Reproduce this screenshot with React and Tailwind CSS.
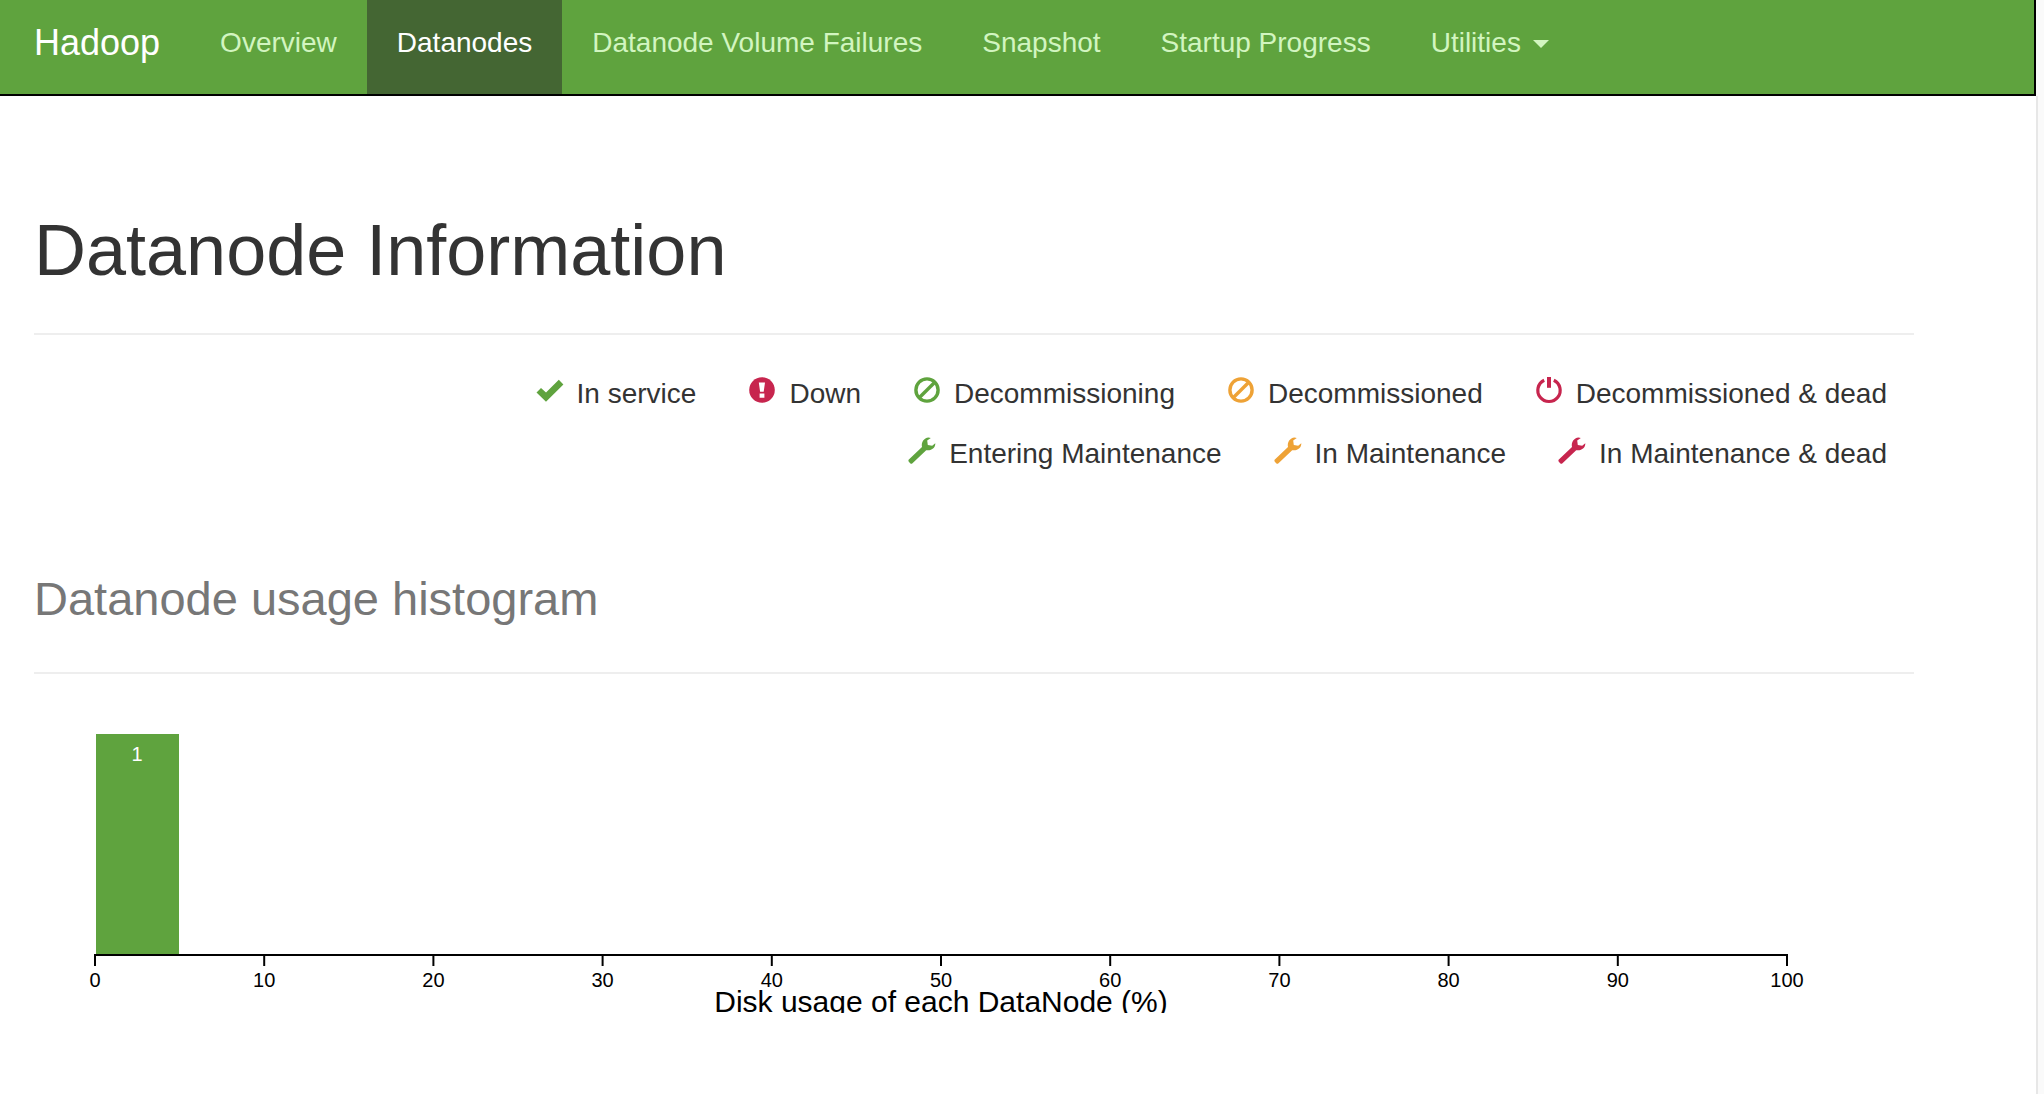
import React from "react";

const navLinks = [
  { label: "Overview" },
  { label: "Datanodes", active: true },
  { label: "Datanode Volume Failures" },
  { label: "Snapshot" },
  { label: "Startup Progress" },
];

const legendRows = [
  [
    { label: "In service", icon: "ok", color: "text-[#5fa33e]" },
    { label: "Down", icon: "alert", color: "text-[#c7254e]" },
    { label: "Decommissioning", icon: "ban", color: "text-[#5fa33e]" },
    { label: "Decommissioned", icon: "ban", color: "text-[#eea236]" },
    { label: "Decommissioned & dead", icon: "off", color: "text-[#c7254e]" },
  ],
  [
    { label: "Entering Maintenance", icon: "wrench", color: "text-[#5fa33e]" },
    { label: "In Maintenance", icon: "wrench", color: "text-[#eea236]" },
    { label: "In Maintenance & dead", icon: "wrench", color: "text-[#c7254e]" },
  ],
];

// all icons share a 28x28 grid
const icons = {
  ok: <path fill="currentColor" d="M0.5 15.5L5 11L10 15.6L22.8 2.8L27.4 7.4L10 24.8z" />,
  alert: (
    <>
      <circle cx="14" cy="13" r="12.8" fill="currentColor" />
      <path fill="#fff" d="M10.8 5.6h6.2l-1.3 9.2h-3.6zM11.6 16.5h4.8v4.2h-4.8z" />
    </>
  ),
  ban: (
    <g fill="none" stroke="currentColor" strokeWidth="3.4">
      <circle cx="14" cy="13" r="11.1" />
      <path d="M6.2 20.8L21.8 5.2" />
    </g>
  ),
  off: (
    <g fill="none" stroke="currentColor">
      <path strokeWidth="3.2" d="M9.2 3.2A11.2 11.2 0 1 0 18.8 3.2" />
      <path strokeWidth="4" d="M14 0V10.8" />
    </g>
  ),
  wrench: (
    <path
      fill="currentColor"
      d="M0.6 22.8L14 10C13 5 16 0.8 20.5 0.4L22.8 0.9L19.2 3.4L19.8 8L24.2 8.8L27.3 6.3C27.6 10.5 23.5 14.2 18.2 13.2L4.2 26.6Q3.2 27.2 2.2 26.3L0.8 24.8Q0 23.8 0.6 22.8z"
    />
  ),
};

function LegendItem({ label, icon, color }) {
  return (
    <li className="flex items-center gap-[13px]">
      <svg viewBox="0 0 28 28" aria-hidden="true" className={`mb-1.5 size-7 ${color}`}>
        {icons[icon]}
      </svg>
      {label}
    </li>
  );
}

function Navbar() {
  return (
    <header className="mr-0.5 flex border-r-2 border-b-2 border-black bg-[#5fa33e] pl-1 text-[28px] leading-10">
      <a href="#brand" className="px-[30px] pt-[23px] pb-[31px] text-4xl leading-10 text-white">
        Hadoop
      </a>
      <nav className="flex">
        {navLinks.map((link) => (
          <a
            key={link.label}
            href="#tab"
            className={
              link.active
                ? "bg-[#446633] px-[30px] pt-[23px] pb-[31px] text-white"
                : "px-[30px] pt-[23px] pb-[31px] text-[#d2f5c0]"
            }
          >
            {link.label}
          </a>
        ))}
        <button
          type="button"
          aria-haspopup="menu"
          className="flex items-center gap-3 px-[30px] pt-[23px] pb-[31px] text-[#d2f5c0]"
        >
          Utilities
          <svg viewBox="0 0 16 8" aria-hidden="true" className="mt-0.5 h-2 w-4">
            <path fill="currentColor" d="M0 0h16l-8 8z" />
          </svg>
        </button>
      </nav>
    </header>
  );
}

function Histogram() {
  const ticks = [0, 10, 20, 30, 40, 50, 60, 70, 80, 90, 100];
  const x = (value) => 61 + value * 16.92;

  return (
    <svg
      viewBox="0 0 1880 319"
      className="block w-full overflow-hidden"
      role="img"
      aria-label="Datanode usage histogram"
    >
      <rect x="62" y="40" width="83" height="220" fill="#5fa33e" />
      <text x="103" y="67" textAnchor="middle" fill="#fff" className="text-[20px]">
        1
      </text>
      <path d={`M${x(0)} 272V261H${x(100)}V272`} fill="none" stroke="#000" strokeWidth="2" />
      {ticks.map((tick) => (
        <g key={tick}>
          <path d={`M${x(tick)} 261V272`} stroke="#000" strokeWidth="2" />
          <text x={x(tick)} y="293" textAnchor="middle" className="text-[20px]">
            {tick}
          </text>
        </g>
      ))}
      <text x={x(50)} y="318" textAnchor="middle" className="text-[30px]">
        Disk usage of each DataNode (%)
      </text>
    </svg>
  );
}

export default function App() {
  return (
    <div className="min-h-screen bg-[#fafafa] pr-1.5 font-['Liberation_Sans',Arial,sans-serif] text-[28px] leading-10 text-[#333]">
      <Navbar />
      <main className="min-h-[998px] border-r-2 border-[#e7e7e7] bg-white pr-[122px] pl-[34px]">
        <h1 className="border-b-2 border-[#eee] pt-[115px] pb-[43px] text-7xl leading-[79px]">
          Datanode Information
        </h1>
        <div className="pt-[39px] pr-[27px]">
          {legendRows.map((row) => (
            <ul key={row[0].label} className="mb-5 flex justify-end gap-[52px]">
              {row.map((item) => (
                <LegendItem key={item.label} {...item} />
              ))}
            </ul>
          ))}
        </div>
        <h2 className="border-b-2 border-[#eee] pt-[79px] pb-[47px] text-[47px] leading-[52px] text-[#777]">
          Datanode usage histogram
        </h2>
        <div className="pt-5">
          <Histogram />
        </div>
      </main>
    </div>
  );
}
